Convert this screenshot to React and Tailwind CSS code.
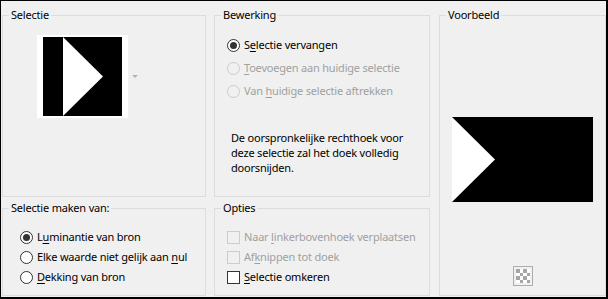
import React from 'react';

const font = { fontFamily: '"Noto Sans", "Open Sans", sans-serif' };

// Windows-style access key underline
const Key = ({ children }) => <span className="underline underline-offset-2">{children}</span>;

const Radio = ({ checked, disabled, children }) => (
  <div className={`flex items-center h-[16px] ${disabled ? 'text-[#a0a0a0]' : 'text-black'}`}>
    <span
      className={`shrink-0 flex items-center justify-center w-[13px] h-[13px] rounded-full border ${
        disabled ? 'border-[#cccccc] bg-[#f0f0f0]' : 'border-[#333333] bg-white'
      }`}
    >
      {checked && <span className="w-[7px] h-[7px] rounded-full bg-[#333333]" />}
    </span>
    <span className="ml-[4px] whitespace-nowrap">{children}</span>
  </div>
);

const Checkbox = ({ disabled, children }) => (
  <div className={`flex items-center h-[16px] ${disabled ? 'text-[#a0a0a0]' : 'text-black'}`}>
    <span
      className={`shrink-0 w-[13px] h-[13px] border ${
        disabled ? 'border-[#cccccc] bg-[#f0f0f0]' : 'border-[#333333] bg-white'
      }`}
    />
    <span className="ml-[4px] whitespace-nowrap">{children}</span>
  </div>
);

const Group = ({ title, className = '', children }) => (
  <fieldset className={`border border-[#dcdcdc] pl-[6px] pr-[6px] min-w-0 ${className}`}>
    <legend className="px-[2px] leading-[16px]">{title}</legend>
    {children}
  </fieldset>
);

const Checker = () => (
  <svg width="14" height="14" viewBox="0 0 4 4" shapeRendering="crispEdges">
    <rect width="4" height="4" fill="#ffffff" />
    {[0, 1, 2, 3].map((r) =>
      [0, 1, 2, 3].map((c) =>
        (r + c) % 2 === 0 ? <rect key={`${r}-${c}`} x={c} y={r} width="1" height="1" fill="#a6a6a6" /> : null
      )
    )}
  </svg>
);

export default function App() {
  return (
    <div
      style={font}
      className="w-[608px] h-[299px] bg-[#f0f0f0] border-t border-l border-r-2 border-b-2 border-black text-[11px] tracking-[-0.2px] text-black pt-[6px] pl-[1px] pb-[1px]"
    >
      <div className="grid grid-cols-[204px_216px_168px] grid-rows-[190px_96px] gap-x-[8px] gap-y-[3px]">
        {/* Selectie */}
        <Group title="Selectie" className="col-start-1 row-start-1">
          <div className="flex items-center mt-[12px] ml-[28px]">
            <div className="bg-white px-[6px] py-[2px]">
              <svg width="79" height="79" viewBox="0 0 79 79" className="block">
                <rect width="79" height="79" fill="#000" />
                <polygon points="20,0 60,39.5 20,79" fill="#fff" />
              </svg>
            </div>
            <svg width="6" height="4" viewBox="0 0 6 4" className="ml-[4px]">
              <polygon points="0,0 6,0 3,3" fill="#b4b4b4" />
            </svg>
          </div>
        </Group>

        {/* Bewerking */}
        <Group title="Bewerking" className="col-start-2 row-start-1">
          <div className="flex flex-col gap-[7px] mt-[14px] ml-[6px]">
            <Radio checked>
              S<Key>e</Key>lectie vervangen
            </Radio>
            <Radio disabled>
              <Key>T</Key>oevoegen aan huidige selectie
            </Radio>
            <Radio disabled>
              Van <Key>h</Key>uidige selectie aftrekken
            </Radio>
          </div>
          <p className="mt-[31px] ml-[10px] leading-[15px] whitespace-nowrap">
            De oorspronkelijke rechthoek voor
            <br />
            deze selectie zal het doek volledig
            <br />
            doorsnijden.
          </p>
        </Group>

        {/* Voorbeeld */}
        <Group title="Voorbeeld" className="col-start-3 row-start-1 row-span-2 ml-[1px]">
          <div className="flex flex-col items-center">
            <svg width="141" height="85" viewBox="0 0 141 85" className="block mt-[94px]">
              <rect width="141" height="85" fill="#000" />
              <polygon points="0,0 43,42.5 0,85" fill="#fff" />
            </svg>
            <div className="mt-[64px] w-[20px] h-[20px] border border-[#adadad] flex items-center justify-center bg-[#f0f0f0]">
              <Checker />
            </div>
          </div>
        </Group>

        {/* Selectie maken van */}
        <Group title="Selectie maken van:" className="col-start-1 row-start-2">
          <div className="flex flex-col gap-[4px] mt-[13px] ml-[11px]">
            <Radio checked>
              L<Key>u</Key>minantie van bron
            </Radio>
            <Radio>
              Elke waarde niet gelijk aan <Key>n</Key>ul
            </Radio>
            <Radio>
              <Key>D</Key>ekking van bron
            </Radio>
          </div>
        </Group>

        {/* Opties */}
        <Group title="Opties" className="col-start-2 row-start-2">
          <div className="flex flex-col gap-[4px] mt-[13px] ml-[6px]">
            <Checkbox disabled>
              Naar <Key>l</Key>inkerbovenhoek verplaatsen
            </Checkbox>
            <Checkbox disabled>
              Af<Key>k</Key>nippen tot doek
            </Checkbox>
            <Checkbox>
              <Key>S</Key>electie omkeren
            </Checkbox>
          </div>
        </Group>
      </div>
    </div>
  );
}
